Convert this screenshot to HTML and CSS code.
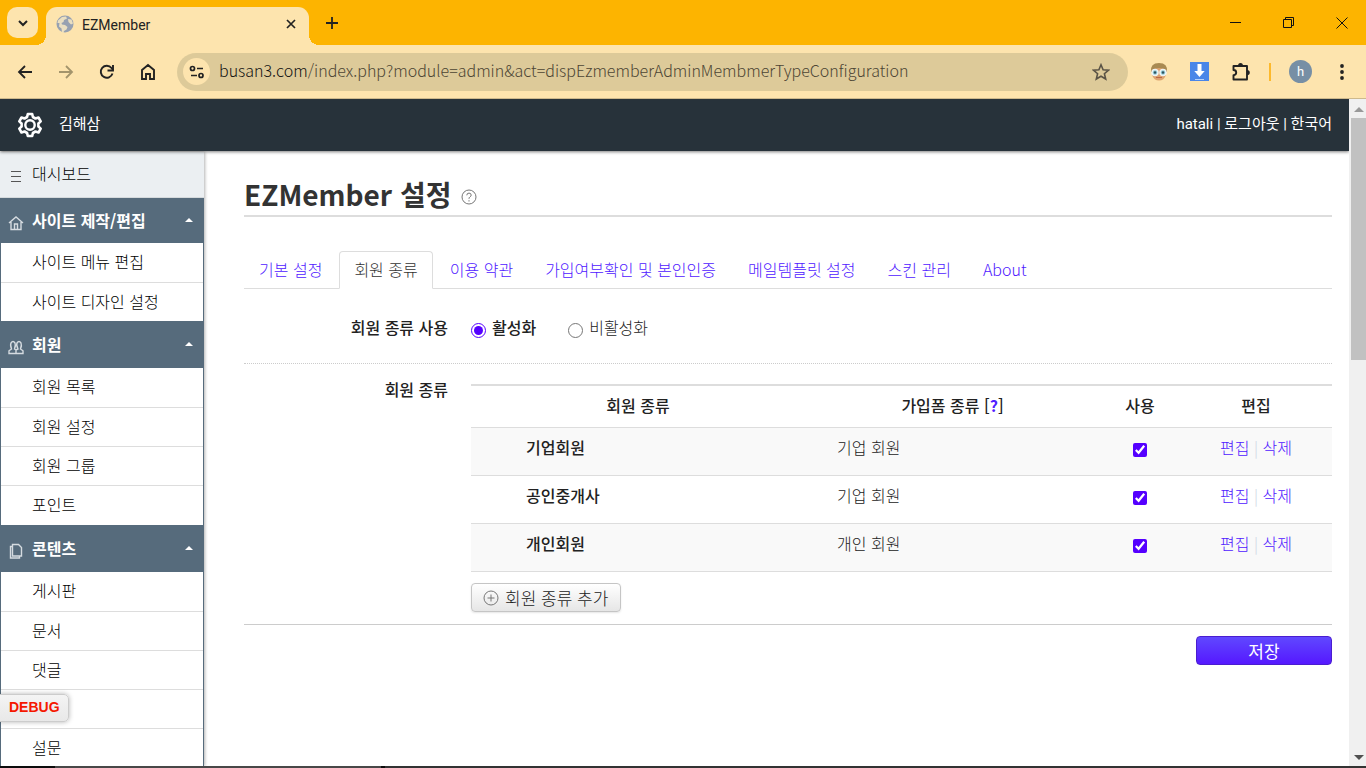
FILE: index.html
```html
<!DOCTYPE html>
<html lang="ko">
<head>
<meta charset="utf-8">
<title>EZMember</title>
<link rel="stylesheet" href="styles.css">
</head>
<body>
<div class="window">
  <div class="tabstrip">
    <button class="tab-search" aria-label="탭 검색"><svg width="12" height="12" viewBox="0 0 12 12"><path d="M2 4l4 4 4-4" fill="none" stroke="#222" stroke-width="2"/></svg></button>
    <div class="browser-tab">
      <svg class="globe" width="18" height="18" viewBox="0 0 18 18"><circle cx="9" cy="9" r="8.500" fill="#97a1b1"/><path d="M2 5.500L6 2l4-.5 1 2-3 1.500-.5 2-2 1 .5 1.500 3 .5 2.500 2-1 2.500-2.500 1.500-.5 2-1.500-1-.5-3.500-2.500-2L3.500 8 1.500 8zM12 4l3.500.5 1.500 4-2 1-2.500-2.500z" fill="#eadfc1"/></svg>
      <span class="browser-tab-title">EZMember</span>
      <button class="plain" aria-label="탭 닫기"><svg width="10" height="10" viewBox="0 0 10 10"><path d="M1 1l8 8M9 1L1 9" stroke="#222" stroke-width="1.700"/></svg></button>
    </div>
    <button class="plain new-tab" aria-label="새 탭"><svg width="12" height="12" viewBox="0 0 12 12"><path d="M6 0v12M0 6h12" stroke="#222" stroke-width="1.800"/></svg></button>
    <div class="window-controls">
      <button class="plain" aria-label="최소화"><svg width="12" height="12" viewBox="0 0 12 12"><path d="M0 5.500h11" stroke="#111"/></svg></button>
      <button class="plain" aria-label="이전 크기로"><svg width="12" height="12" viewBox="0 0 12 12"><path d="M.5 2.500h8v8h-8zM2.500 2V.5h8v8H9" fill="none" stroke="#111"/></svg></button>
      <button class="plain" aria-label="닫기"><svg width="12" height="12" viewBox="0 0 12 12"><path d="M.5.5l11 11M11.500.5l-11 11" stroke="#111"/></svg></button>
    </div>
  </div>

  <div class="toolbar">
    <div class="nav-buttons">
      <button class="plain" aria-label="뒤로"><svg width="16" height="16" viewBox="0 0 16 16"><path d="M15 8H2M8 2L2 8l6 6" fill="none" stroke="#222" stroke-width="1.800"/></svg></button>
      <button class="plain" aria-label="앞으로"><svg width="16" height="16" viewBox="0 0 16 16"><path d="M1 8h13M8 2l6 6-6 6" fill="none" stroke="#a3946c" stroke-width="1.800"/></svg></button>
      <button class="plain" aria-label="새로고침"><svg width="16" height="16" viewBox="0 0 16 16"><path d="M13.500 9.500A6 6 0 1 1 12.500 4L14 6" fill="none" stroke="#222" stroke-width="1.900"/><path d="M14 1v5.500H8.500" fill="none" stroke="#222" stroke-width="1.900"/></svg></button>
      <button class="plain" aria-label="홈"><svg width="16" height="18" viewBox="0 0 16 18"><path d="M2 7l6-5 6 5v9h-4v-5H6v5H2z" fill="none" stroke="#222" stroke-width="1.900"/></svg></button>
    </div>
    <div class="address">
      <button class="site-info" aria-label="사이트 정보"><svg width="16" height="14" viewBox="0 0 16 14"><g fill="none" stroke="#222" stroke-width="1.700"><circle cx="3.500" cy="3.500" r="2"/><path d="M8 3.500h6M2 10.500h6"/><circle cx="12" cy="10.500" r="2"/></g></svg></button>
      <span class="url">busan3.com<span class="url-path">/index.php?module=admin&amp;act=dispEzmemberAdminMembmerTypeConfiguration</span></span>
      <button class="plain" aria-label="북마크"><svg width="18" height="18" viewBox="0 0 18 18"><path d="M9 1.800l2.100 5 5.400.4-4.100 3.500 1.300 5.300L9 13.200 4.300 16l1.300-5.300L1.500 7.200l5.400-.4z" fill="none" stroke="#5b5446" stroke-width="1.600"/></svg></button>
    </div>
    <div class="extensions">
      <svg width="18" height="18" viewBox="0 0 18 18"><path d="M1 9Q0 0 9 0t8 9z" fill="#a98a52"/><path d="M2 7Q9 3 16 7v5q-2 5.500-7 5.500T2 12z" fill="#dda26e"/><circle cx="5" cy="9.500" r="3" fill="#8fcbd8" stroke="#eef4f5" stroke-width="1.500"/><circle cx="13" cy="9.500" r="3" fill="#8fcbd8" stroke="#eef4f5" stroke-width="1.500"/><circle cx="5" cy="9.500" r="1.200" fill="#31515c"/><circle cx="13" cy="9.500" r="1.200" fill="#31515c"/><path d="M6 14.500h6" stroke="#b96848"/></svg>
      <svg width="19" height="19" viewBox="0 0 19 19"><path d="M0 0h19v19H0z" fill="#4a86e8"/><path d="M7.500 2h4v7h3.200l-5.200 6-5.200-6h3.200z" fill="#fff"/><path d="M5 17.500h9" stroke="#b9d2fa"/></svg>
      <svg width="20" height="20" viewBox="0 0 20 20"><path d="M3 4h13v13.500H2.500v-4.300q2.700-.2 2.700-2.700T2.500 8V4z" fill="none" stroke="#222" stroke-width="1.900" stroke-linejoin="round"/><path d="M7 4a2.300 2.800 0 0 1 5 0M16 8a2.800 2.600 0 0 1 0 5.200" fill="#222"/></svg>
      <span class="ext-divider"></span>
      <button class="profile" aria-label="프로필">h</button>
      <button class="plain" aria-label="메뉴"><svg width="6" height="18" viewBox="0 0 6 18"><g fill="#222"><circle cx="3" cy="3" r="1.900"/><circle cx="3" cy="9" r="1.900"/><circle cx="3" cy="15" r="1.900"/></g></svg></button>
    </div>
  </div>

  <div class="viewport">
    <div class="page">
      <header class="site-header">
        <svg width="26" height="26" viewBox="0 0 26 26"><path d="M10.800 2h4.400l.7 3 2.600 1.500 3-1 2.200 3.900-2.300 2.100v3l2.300 2.100-2.200 3.900-3-1-2.600 1.500-.7 3h-4.400l-.7-3-2.600-1.500-3 1-2.200-3.900 2.300-2.100v-3L2.300 9.400l2.200-3.900 3 1L10.100 5z" fill="none" stroke="#fff" stroke-width="2.600" stroke-linejoin="round"/><circle cx="13" cy="13" r="4.700" fill="none" stroke="#fff" stroke-width="2.400"/></svg>
        <a href="#" class="site-name">김해삼</a>
        <nav class="account"><a href="#">hatali</a> | <a href="#">로그아웃</a> | <a href="#">한국어</a></nav>
      </header>
      <div class="columns">
        <nav class="sidebar">
          <a href="#" class="dashboard"><svg width="16" height="16" viewBox="0 0 16 16"><path d="M3 3.500h10M3 8.500h10M3 13.500h10" stroke="#555"/></svg>대시보드</a>
          <button class="group"><svg width="16" height="16" viewBox="0 0 16 16"><path d="M1 8l7-6 7 6M3 7v7.500h10V7M6.500 14V9h3v5" fill="none" stroke="#d5dbe0" stroke-width="1.400"/></svg><span>사이트 제작/편집</span><i class="caret"></i></button>
          <ul><li><a href="#">사이트 메뉴 편집</a></li><li><a href="#">사이트 디자인 설정</a></li></ul>
          <button class="group"><svg width="16" height="16" viewBox="0 0 16 16"><path d="M8 14.500H1v-2.700l2.500-1.800Q2 6 3 4q2-3 4 0 1 2-.5 6L8 11zM8 11l2-1Q8 6 9 4q2-3 4 0 1 2-.5 6l2.500 1.800v2.700H8" fill="none" stroke="#d5dbe0" stroke-width="1.400"/></svg><span>회원</span><i class="caret"></i></button>
          <ul><li><a href="#">회원 목록</a></li><li><a href="#">회원 설정</a></li><li><a href="#">회원 그룹</a></li><li><a href="#">포인트</a></li></ul>
          <button class="group"><svg width="16" height="16" viewBox="0 0 16 16"><path d="M4.500 1.500h6l3 3v8.500h-9zM4.500 3.500h-2v11.500h9v-2" fill="none" stroke="#d5dbe0" stroke-width="1.400"/></svg><span>콘텐츠</span><i class="caret"></i></button>
          <ul><li><a href="#">게시판</a></li><li><a href="#">문서</a></li><li><a href="#">댓글</a></li><li></li><li><a href="#">설문</a></li></ul>
        </nav>
        <main class="content">
          <h1>EZMember 설정 <a href="#" class="help" aria-label="도움말"><svg width="16" height="16" viewBox="0 0 16 16"><g fill="none" stroke="#777"><circle cx="8" cy="8" r="7"/><path d="M5.800 6.300q0-2.200 2.200-2.200t2.200 2q0 1-1.200 1.800T8 9.800M8 11.200v1.300"/></g></svg></a></h1>
          <nav class="tabs">
            <a href="#">기본 설정</a><a href="#" class="active">회원 종류</a><a href="#">이용 약관</a><a href="#">가입여부확인 및 본인인증</a><a href="#">메일템플릿 설정</a><a href="#">스킨 관리</a><a href="#">About</a>
          </nav>
          <form>
            <div class="field use-field">
              <span class="field-label">회원 종류 사용</span>
              <div class="choices">
                <label class="chosen"><input type="radio" name="use" checked>활성화</label>
                <label><input type="radio" name="use">비활성화</label>
              </div>
            </div>
            <div class="field type-field">
              <span class="field-label">회원 종류</span>
              <div class="field-body">
                <table>
                  <colgroup><col><col class="col-form"><col class="col-use"><col class="col-edit"></colgroup>
                  <thead><tr><th>회원 종류</th><th>가입폼 종류 [<a href="#">?</a>]</th><th>사용</th><th>편집</th></tr></thead>
                  <tbody>
                    <tr><td class="type">기업회원</td><td class="form-type">기업 회원</td><td class="center"><input type="checkbox" checked aria-label="기업회원 사용"></td><td class="center actions"><a href="#">편집</a> | <a href="#">삭제</a></td></tr>
                    <tr><td class="type">공인중개사</td><td class="form-type">기업 회원</td><td class="center"><input type="checkbox" checked aria-label="공인중개사 사용"></td><td class="center actions"><a href="#">편집</a> | <a href="#">삭제</a></td></tr>
                    <tr><td class="type">개인회원</td><td class="form-type">개인 회원</td><td class="center"><input type="checkbox" checked aria-label="개인회원 사용"></td><td class="center actions"><a href="#">편집</a> | <a href="#">삭제</a></td></tr>
                  </tbody>
                </table>
                <button type="button" class="add"><svg width="16" height="16" viewBox="0 0 16 16"><path d="M8 4.500v7M4.500 8h7" stroke="#777"/><circle cx="8" cy="8" r="7" fill="none" stroke="#777"/></svg>회원 종류 추가</button>
              </div>
            </div>
            <div class="form-actions"><button type="button" class="save">저장</button></div>
          </form>
        </main>
      </div>
      <button class="debug">DEBUG</button>
    </div>
    <div class="scrollbar">
      <i class="arrow up"></i><i class="thumb"></i><i class="arrow down"></i>
    </div>
  </div>
  <div class="taskbar"></div>
</div>
</body>
</html>
```
FILE: styles.css
```css
* { box-sizing: border-box; }
body {
  margin: 0;
  color: #222;
  font: 300 16px/22px "Noto Sans CJK KR", sans-serif;
}
a { color: #5020ff; text-decoration: none; }
button { font: inherit; cursor: pointer; }
svg { display: block; flex: none; }
.plain { display: flex; padding: 0; border: 0; background: none; }

.window { display: flex; flex-direction: column; height: 100vh; overflow: hidden; }

/* browser frame */
.tabstrip {
  display: flex;
  align-items: center;
  flex: none;
  height: 45px;
  padding-left: 7px;
  background: #fdb400;
}
.tab-search {
  display: grid;
  place-items: center;
  width: 31px;
  height: 31px;
  padding: 0;
  border: 0;
  border-radius: 10px;
  background: #fde4ae;
}
.browser-tab {
  position: relative;
  display: flex;
  align-items: center;
  align-self: flex-end;
  gap: 8px;
  width: 263px;
  height: 38px;
  margin-left: 8px;
  padding: 0 13px 5px 10px;
  border-radius: 11px 11px 0 0;
  background: #fde4ae;
}
.browser-tab::before,
.browser-tab::after {
  content: "";
  position: absolute;
  bottom: 0;
  width: 10px;
  height: 10px;
}
.browser-tab::before { right: 100%; background: radial-gradient(circle at 0 0, #fdb400 10px, #fde4ae 10px); }
.browser-tab::after { left: 100%; background: radial-gradient(circle at 100% 0, #fdb400 10px, #fde4ae 10px); }
.browser-tab-title { flex: 1; padding-top: 2px; color: #222; font: 14px/20px Roboto, sans-serif; }
.new-tab { margin-left: 17px; }
.window-controls { display: flex; gap: 41px; margin-left: auto; padding-right: 18px; }

.toolbar {
  display: flex;
  align-items: center;
  flex: none;
  height: 54px;
  padding: 0 21px 0 17px;
  border-bottom: 1px solid #cdb98d;
  background: #fde4ae;
}
.nav-buttons { display: flex; align-items: center; gap: 25px; }
.address {
  display: flex;
  align-items: center;
  flex: 1;
  height: 38px;
  margin-left: 21px;
  padding: 0 18px 0 6px;
  border-radius: 19px;
  background: #ddca99;
}
.site-info {
  display: grid;
  place-items: center;
  width: 27px;
  height: 27px;
  padding: 0;
  border: 0;
  border-radius: 50%;
  background: #fde4ae;
}
.url { flex: 1; padding: 0 0 3px 9px; color: #111; }
.url-path { color: #4c4534; }
.extensions { display: flex; align-items: center; gap: 18px; margin-left: 22px; }
.extensions svg + svg { margin-left: 4px; }
.ext-divider { width: 2px; height: 18px; background: #fdb92c; }
.profile {
  width: 23px;
  height: 23px;
  margin-right: 9px;
  padding: 0;
  border: 0;
  border-radius: 50%;
  background: #778fa5;
  color: #fff;
  font: 13px/23px Roboto, sans-serif;
}

.viewport { display: flex; flex: 1; min-height: 0; }
.page { position: relative; display: flex; flex-direction: column; flex: 1; overflow: hidden; background: #fff; }
.scrollbar {
  display: flex;
  flex-direction: column;
  align-items: center;
  width: 17px;
  padding: 8px 0 6px 2px;
  background: #f0f0f0;
}
.arrow { border: 5px solid transparent; }
.up { border-top: 0; border-bottom-color: #999; }
.down { margin-top: auto; border-bottom: 0; border-top-color: #505050; }
.thumb { width: 100%; height: 37%; margin-top: 6px; background: #c1c1c1; }
.taskbar {
  flex: none;
  height: 2px;
  background: linear-gradient(90deg, #0c0c0c 55px, #484848 55px 381px, #0c0c0c 381px 385px, #333 385px);
}

/* site header */
.site-header {
  position: relative;
  z-index: 1;
  display: flex;
  align-items: center;
  flex: none;
  height: 52px;
  padding: 0 17px;
  background: #27323a;
  box-shadow: 0 1px 3px rgba(0, 0, 0, .5);
  color: #fff;
  font: 15px/22px Roboto, "Noto Sans CJK KR", sans-serif;
}
.site-header a { color: #fff; }
.site-name { margin-left: 16px; padding-bottom: 3px; }
.account { margin-left: auto; padding-bottom: 3px; }

.columns { display: flex; flex: 1; min-height: 0; padding-top: 1px; }

/* sidebar */
.sidebar {
  flex: none;
  width: 204px;
  overflow: hidden;
  box-shadow: 1px 0 3px rgba(0, 0, 0, .3);
}
.sidebar svg { margin: 6px 8px 0 0; }
.dashboard {
  display: flex;
  align-items: center;
  height: 46px;
  padding: 0 8px 4px;
  border-bottom: 1px solid #d5dadd;
  background: #ebeff2;
  color: #000;
}
.group {
  display: flex;
  align-items: center;
  width: 100%;
  height: 46px;
  padding: 0 11px 2px 8px;
  border: 0;
  background: #566b7c;
  color: #fff;
  font-weight: 600;
  text-align: left;
}
.dashboard + .group { height: 45px; }
.caret { margin-left: auto; border: 4px solid transparent; border-top: 0; border-bottom-color: #fff; }
.sidebar ul {
  margin: 0;
  padding: 0;
  border: solid #566b7c;
  border-width: 0 1px 1px;
  list-style: none;
}
.sidebar li { height: 39px; padding: 7px 31px; }
.sidebar li:last-child { height: 40px; }
.dashboard + .group + ul li:last-child { height: 39px; }
.sidebar li + li { border-top: 1px solid #ddd; }
.sidebar li a { color: #000; }

.debug {
  position: absolute;
  bottom: 44px;
  left: -1px;
  padding: 2px 8px 4px 9px;
  border: 1px solid #ccc;
  border-radius: 0 5px 5px 0;
  background: linear-gradient(#f4f4f4, #e8e8e8);
  box-shadow: 0 0 5px rgba(0, 0, 0, .3);
  color: #f51800;
  font: bold 14px/20px "Liberation Sans", Arial, sans-serif;
}

/* main */
.content { flex: 1; padding: 23px 17px 0 40px; }
h1 {
  display: flex;
  align-items: center;
  gap: 10px;
  margin: 0;
  padding-bottom: 2px;
  border-bottom: 2px solid #ddd;
  color: #333;
  font-size: 28px;
  font-weight: 600;
  line-height: 38px;
}
.help { padding-top: 6px; }
.tabs {
  display: flex;
  gap: 2px;
  margin-top: 34px;
  border-bottom: 1px solid #ddd;
}
.tabs a {
  margin-bottom: -1px;
  padding: 6px 14px 8px;
  border: 1px solid transparent;
  border-radius: 4px 4px 0 0;
}
.tabs .active { border-color: #ddd; border-bottom-color: #fff; color: #333; }

.field { display: flex; gap: 23px; }
.field-label { flex: none; width: 204px; font-weight: 500; text-align: right; }
.use-field { padding: 27px 0 25px; border-bottom: 1px dotted #ccc; }
.type-field { padding: 20px 0 12px; }
.type-field .field-label { line-height: 11px; }
.choices { display: flex; gap: 32px; }
.choices label { display: flex; gap: 6px; }
.choices .chosen { font-weight: 500; }
.choices input { width: 15px; height: 15px; margin: 7px 0 0; accent-color: #5500ff; }
.field-body { flex: 1; }
table {
  width: 100%;
  border-top: 2px solid #ddd;
  border-collapse: collapse;
  table-layout: fixed;
}
.col-form { width: 295px; }
.col-use { width: 80px; }
.col-edit { width: 152px; }
th { height: 42px; padding: 0 0 2px; font-weight: 500; }
th a { font-weight: 700; }
td { height: 48px; padding: 8px 0 13px; vertical-align: top; border-top: 1px solid #ddd; }
tbody { border-bottom: 1px solid #ddd; }
tbody tr:nth-child(odd) { background: #f9f9f9; }
.type { padding-left: 55px; font-weight: 500; }
.form-type { padding-left: 32px; }
.center { text-align: center; }
.center input { width: 14px; height: 14px; margin: 7px 0 0; accent-color: #5500ff; }
.actions { color: #ccd3e2; }
.add {
  display: flex;
  align-items: center;
  gap: 6px;
  margin-top: 11px;
  padding: 0 12px 0 11px;
  border: 1px solid #c5c5c5;
  border-radius: 4px;
  background: linear-gradient(#fff, #e6e6e6);
  box-shadow: 0 1px 2px rgba(0, 0, 0, .1);
  color: #222;
  font-size: 17px;
  line-height: 27px;
}
.add svg { margin-top: 2px; }
.form-actions { display: flex; justify-content: flex-end; padding-top: 11px; border-top: 1px solid #ccc; }
.save {
  width: 136px;
  padding: 0;
  border: 1px solid #4a1dd0;
  border-radius: 4px;
  background: linear-gradient(#6048ff, #5518ff);
  color: #fff;
  font-size: 17px;
  font-weight: 400;
  line-height: 27px;
}
```
